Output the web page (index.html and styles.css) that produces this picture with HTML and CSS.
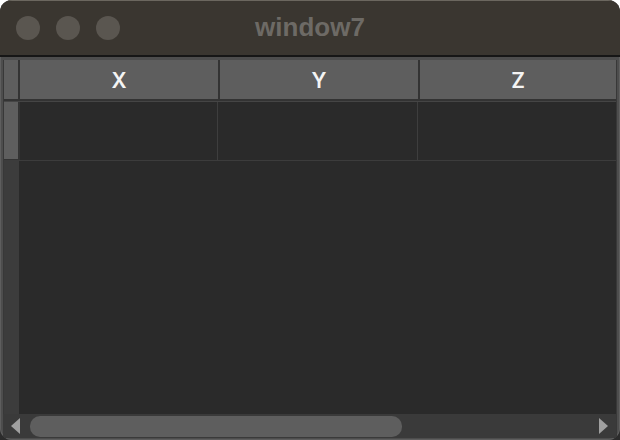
FILE: index.html
```html
<!DOCTYPE html>
<html>
<head>
<meta charset="utf-8">
<link rel="stylesheet" href="styles.css">
</head>
<body>
<div class="window">
  <div class="titlebar">
    <div class="lights">
      <span class="light"></span>
      <span class="light"></span>
      <span class="light"></span>
    </div>
    <div class="title">window7</div>
  </div>
  <div class="body">
    <div class="table">
      <div class="hrow">
        <div class="corner"></div>
        <div class="hcell w1">X</div>
        <div class="hcell w1">Y</div>
        <div class="hcell last">Z</div>
      </div>
      <div class="drow">
        <div class="rhead"></div>
        <div class="cells">
          <div class="dcell c1"></div>
          <div class="dcell c2"></div>
          <div class="dcell c3"></div>
        </div>
      </div>
      <div class="rest">
        <div class="strip"></div>
        <div class="empty"></div>
      </div>
      <div class="hscroll">
        <span class="arrow left"></span>
        <div class="track"><div class="thumb"></div></div>
        <span class="arrow right"></span>
      </div>
    </div>
  </div>
</div>
</body>
</html>
```

FILE: styles.css
```css
html, body {
  margin: 0;
  padding: 0;
}
body {
  width: 620px;
  height: 440px;
  background: linear-gradient(#ffffff 50%, #2c2c2c 50%);
  font-family: "Liberation Sans", Arial, sans-serif;
}
.window {
  width: 620px;
  height: 440px;
  box-sizing: border-box;
  border-radius: 12px;
  overflow: hidden;
  background: #4d4d4d;
  display: flex;
  flex-direction: column;
  box-shadow: inset 0 0 0 1px #5e5e5e;
}
.titlebar {
  height: 55px;
  flex: none;
  background: #3a3630;
  border-bottom: 2px solid #161616;
  box-shadow: inset 0 1px 0 #6b675f;
  position: relative;
  display: flex;
  align-items: center;
  justify-content: center;
}
.lights {
  position: absolute;
  left: 16px;
  top: 16px;
  display: flex;
  gap: 16px;
}
.light {
  width: 24px;
  height: 24px;
  border-radius: 50%;
  background: #5a5650;
}
.title {
  font-size: 26px;
  font-weight: bold;
  color: #6d6a65;
  margin-top: -1px;
}
.body {
  flex: 1;
  display: flex;
  padding: 3px 3px 2px 3px;
  min-height: 0;
}
.table {
  flex: 1;
  display: flex;
  flex-direction: column;
  border-left: 1px solid #383838;
  border-right: 1px solid #383838;
  background: #2a2a2a;
}
.hrow {
  height: 39px;
  display: flex;
  border-bottom: 2px solid #333333;
  flex: none;
}
.corner {
  width: 14px;
  background: #5e5e5e;
}
.hcell {
  background: #5e5e5e;
  border-left: 2px solid #333333;
  color: #f4f4f4;
  font-family: Inter, "Liberation Sans", sans-serif;
  font-weight: 600;
  font-size: 21px;
  display: flex;
  align-items: center;
  justify-content: center;
  padding-top: 2px;
  box-sizing: border-box;
}
.w1 {
  width: 200px;
}
.last {
  flex: 1;
}
.drow {
  height: 58px;
  display: flex;
  flex: none;
  border-top: 1px solid #454545;
  border-bottom: 1px solid #3c3c3c;
}
.rhead {
  width: 14px;
  background: #5e5e5e;
  border-bottom: 1px solid #333333;
}
.cells {
  flex: 1;
  display: flex;
  border-left: 2px solid #333333;
}
.dcell {
  background: #2a2a2a;
}
.c1 {
  width: 197px;
  border-right: 1px solid #3e3e3e;
}
.c2 {
  width: 199px;
  border-right: 1px solid #3e3e3e;
}
.c3 {
  flex: 1;
}
.rest {
  flex: 1;
  display: flex;
}
.strip {
  width: 15px;
  background: #3c3c3c;
}
.empty {
  flex: 1;
  background: #2a2a2a;
}
.hscroll {
  height: 24px;
  flex: none;
  background: #3a3a3a;
  display: flex;
  align-items: center;
  margin-left: -1px;
}
.arrow {
  width: 0;
  height: 0;
  border-top: 8px solid transparent;
  border-bottom: 8px solid transparent;
  flex: none;
}
.arrow.left {
  border-right: 9px solid #a0a0a0;
  margin-left: 8px;
}
.arrow.right {
  border-left: 9px solid #a0a0a0;
  margin-right: 8px;
}
.track {
  flex: 1;
  height: 21px;
  padding-left: 10px;
  margin-right: 190px;
  display: flex;
}
.thumb {
  width: 372px;
  height: 21px;
  border-radius: 10px;
  background: #5e5e5e;
}
```
